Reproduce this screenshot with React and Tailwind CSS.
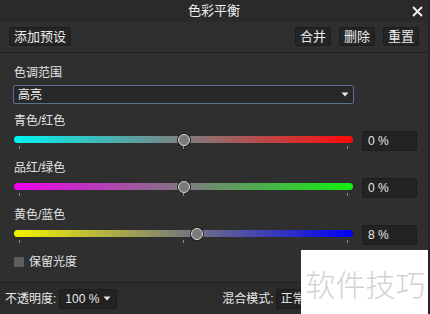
import React from 'react'

const font = { fontFamily: '"Liberation Sans", "Noto Sans CJK SC", sans-serif' }

// plain sRGB gradients so the middle of each track goes grey, as in the reference
const sliders = [
  { label: '青色/红色', track: 'bg-[linear-gradient(to_right,#00f4f4,#ff0a0a)]', value: 0 },
  { label: '品红/绿色', track: 'bg-[linear-gradient(to_right,#f000f0,#10f010)]', value: 0 },
  { label: '黄色/蓝色', track: 'bg-[linear-gradient(to_right,#f4f400,#0000f4)]', value: 8 },
]

function Caret() {
  return (
    <svg width="8" height="5" viewBox="0 0 8 5">
      <path d="M0.5 0.5 L7.5 0.5 L4 4.5 Z" fill="#e8e8e8" />
    </svg>
  )
}

function Btn({ children }) {
  return (
    <div className="h-[19px] px-[4px] flex items-center rounded-[2px] bg-[#242424] border border-[#1c1c1c] text-[13px] text-[#ececec] leading-none">
      {children}
    </div>
  )
}

function SliderBlock({ item }) {
  // thumb travels between the two outer ticks (5px in from each end)
  const pos = 169.5 + (item.value / 100) * 164.5
  return (
    <div className="mt-[10px] first:mt-[9px]">
      <div className="h-[14px] leading-[14px] text-[12px] text-[#e2e2e2]">{item.label}</div>
      <div className="mt-[3px] flex items-start h-[20px]">
        <div className="relative w-[339px] h-[20px]">
          <div className={`absolute left-0 right-0 top-[5px] h-[7px] rounded-full ${item.track}`} />
          <div
            className="absolute top-[2.5px] w-[12px] h-[12px] -ml-[6px] rounded-full bg-[#7a7a7a] border-[1.5px] border-[#d8d8d8] shadow-[0_0_0_1px_#222]"
            style={{ left: pos }}
          />
          <div className="absolute top-[15px] left-[5px] right-[5px] flex justify-between">
            <div className="w-[1px] h-[3px] bg-[#8a8a8a]" />
            <div className="w-[1px] h-[3px] bg-[#8a8a8a]" />
            <div className="w-[1px] h-[3px] bg-[#8a8a8a]" />
          </div>
        </div>
        <div className="ml-[9px] w-[55px] h-[20px] rounded-[2px] bg-[#232323] border border-[#1d1d1d] flex items-center pl-[5px] text-[12px] text-[#e6e6e6]">
          {item.value} %
        </div>
      </div>
    </div>
  )
}

export default function App() {
  return (
    <div className="relative w-[430px] h-[314px] overflow-hidden bg-[#2f2f2f] flex flex-col border-r-2 border-[#232323]" style={font}>
      {/* title */}
      <div className="relative h-[22px] bg-[#2a2a2a] flex items-center justify-center text-[13px] text-[#f0f0f0]">
        色彩平衡
        <svg className="absolute right-[5px] top-[6px]" width="11" height="11" viewBox="0 0 11 11">
          <path d="M1 1 L10 10 M10 1 L1 10" stroke="#f2f2f2" strokeWidth="1.8" />
        </svg>
      </div>

      {/* toolbar */}
      <div className="h-[31px] bg-[#2f2f2f] border-b border-[#1f1f1f] flex items-center px-[9px] pb-[1px]">
        <Btn>添加预设</Btn>
        <div className="flex-1" />
        <div className="flex gap-[8px]">
          <Btn>合并</Btn>
          <Btn>删除</Btn>
          <Btn>重置</Btn>
        </div>
      </div>

      {/* content */}
      <div className="pl-[14px] flex flex-col">
        <div className="mt-[13px] h-[14px] leading-[14px] text-[12px] text-[#e2e2e2]">色调范围</div>
        <div className="mt-[5px] -ml-[1px] w-[341px] h-[19px] rounded-[2px] bg-[#282828] border border-[#5c7192] flex items-center pl-[4px] pr-[4px] text-[12px] text-[#f0f0f0]">
          <span className="flex-1">高亮</span>
          <Caret />
        </div>
        {sliders.map(s => <SliderBlock key={s.label} item={s} />)}
        <div className="mt-[10px] h-[14px] flex items-center gap-[5px] text-[12px] text-[#e2e2e2]">
          <div className="w-[10px] h-[10px] rounded-[1px] bg-[#5e5e5e]" />
          <span>保留光度</span>
        </div>
      </div>

      <div className="flex-1" />

      {/* bottom bar */}
      <div className="h-[32px] border-t border-[#1f1f1f] bg-[#2c2c2c] flex items-center pl-[5px] text-[12px] text-[#e8e8e8]">
        <span>不透明度:</span>
        <div className="ml-[3px] w-[58px] h-[20px] rounded-[2px] bg-[#222222] border border-[#1b1b1b] flex items-center pl-[5px] pr-[5px]">
          <span className="flex-1">100 %</span>
          <Caret />
        </div>
        <span className="ml-[105px]">混合模式:</span>
        <div className="ml-[2px] w-[80px] h-[20px] rounded-[2px] bg-[#222222] border border-[#1b1b1b] flex items-center pl-[4px]">
          正常
        </div>
      </div>

      {/* watermark overlay */}
      <div className="absolute left-[301px] top-[250px] w-[129px] h-[64px] bg-white flex items-center justify-center">
        <span className="text-[30px] leading-none text-[#d2d2d2] mt-[1px]" style={{ fontFamily: '"Noto Sans CJK SC", sans-serif', fontWeight: 300 }}>
          软件技巧
        </span>
      </div>
    </div>
  )
}
